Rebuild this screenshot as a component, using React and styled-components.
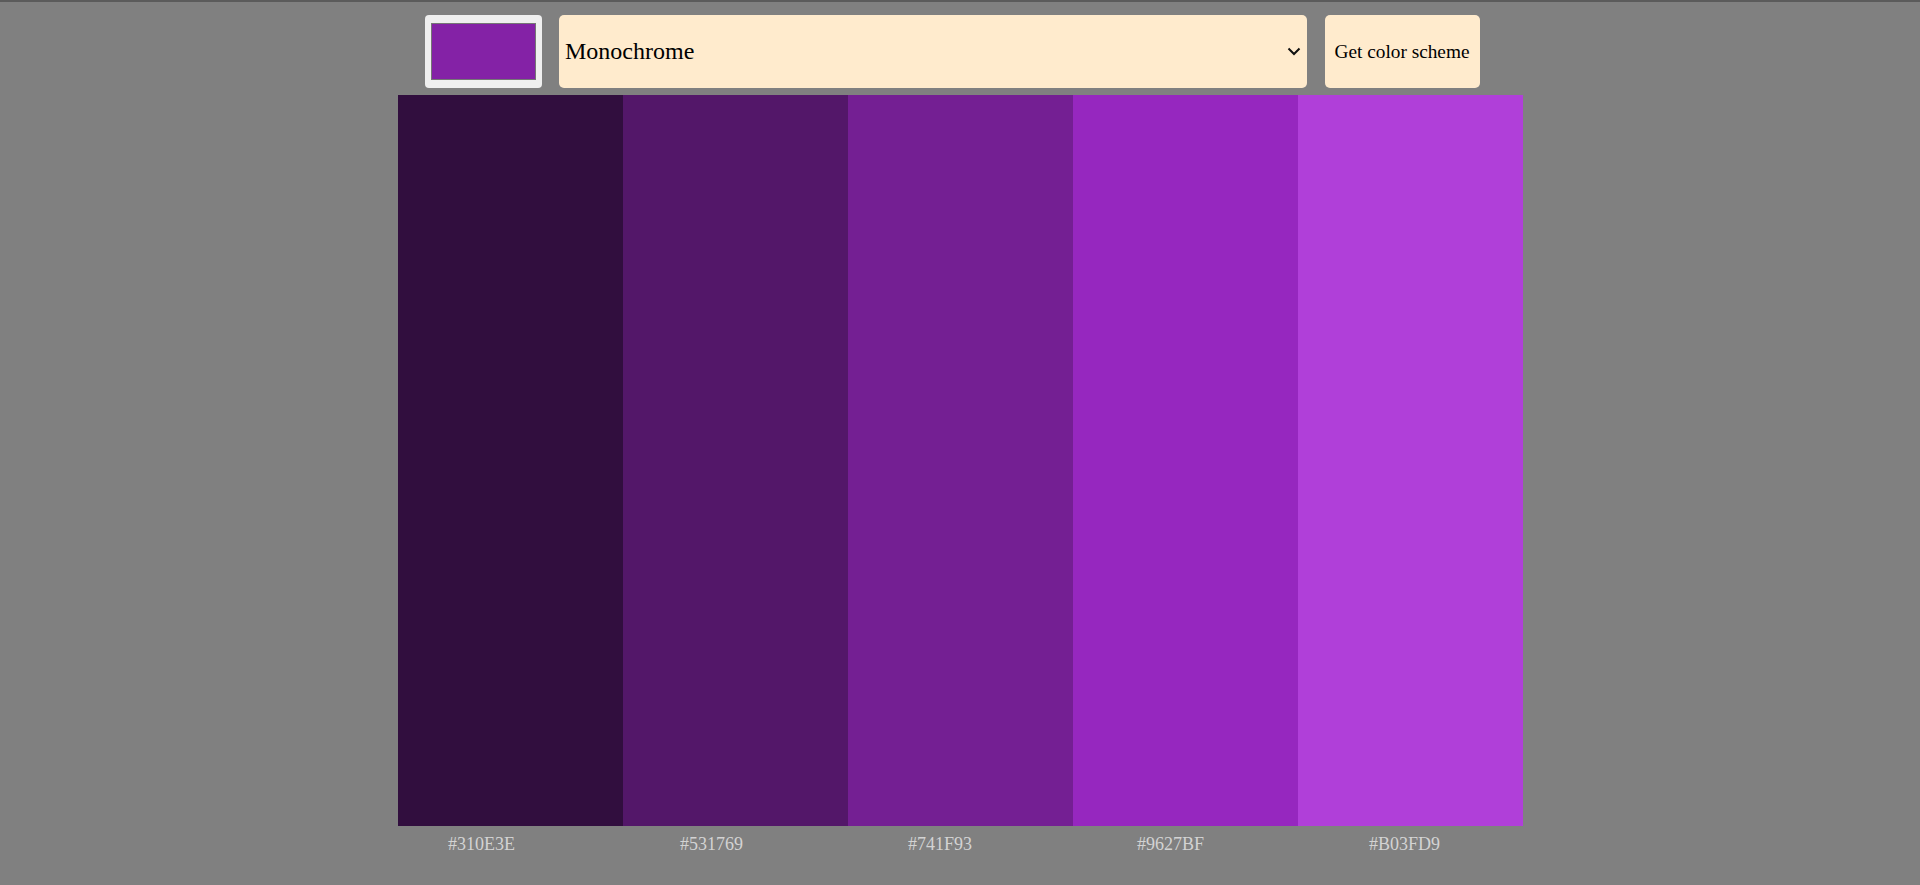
import React, { useState } from "react"
import styled, { createGlobalStyle } from "styled-components"

const GlobalStyle = createGlobalStyle`
  html, body {
    margin: 0;
    background-color: #808080;
    font-family: "Liberation Serif", "Times New Roman", serif;
  }
`

const Page = styled.div`
  border-top: 2px solid #5b5b5b;
  min-height: 883px;
  box-sizing: border-box;
`

const Main = styled.div`
  width: 1125px;
  margin: 0 auto;
  padding-top: 13px;
`

const Toolbar = styled.form`
  display: flex;
  gap: 17.5px;
  height: 73px;
  margin: 0 0 7px 27px;
`

const ColorPicker = styled.div`
  width: 117px;
  box-sizing: border-box;
  padding: 8px 6px;
  background-color: #efefef;
  border-radius: 4px;
  display: flex;
`

const Swatch = styled.div`
  flex: 1;
  background-color: ${ ({ color }) => color };
  border: 1px solid #767676;
`

const SelectBox = styled.div`
  position: relative;
  width: 748px;
  display: flex;
  align-items: center;
  box-sizing: border-box;
  padding: 0 6px;
  background-color: #ffebcd;
  border-radius: 5px;
  font-size: 24px;
  color: #000;

  svg {
    position: absolute;
    right: 6px;
    top: 32px;
  }
`

const Button = styled.button`
  width: 155px;
  padding: 0 9px;
  border: none;
  border-radius: 5px;
  background-color: #ffebcd;
  font-family: "Liberation Serif", "Times New Roman", serif;
  font-size: 19.3px;
  color: #000;
  white-space: nowrap;
`

const Palette = styled.div`
  display: grid;
  grid-template-columns: repeat(5, 1fr);
  height: 731px;
`

const Stripe = styled.div`
  background-color: ${ ({ color }) => color };
`

const Labels = styled.div`
  display: flex;
  justify-content: space-around;
  width: 1157px;
  margin: 8px 0 0 -32px;
`

const Label = styled.p`
  margin: 0;
  font-size: 18px;
  color: #d3d3d3;
`

const colors = ["#310E3E", "#531769", "#741F93", "#9627BF", "#B03FD9"]

const App = () => {
  const [seed] = useState("#8422a6")

  return (
    <Page>
      <GlobalStyle />
      <Main>
        <Toolbar onSubmit={ e => e.preventDefault() }>
          <ColorPicker>
            <Swatch color={ seed } />
          </ColorPicker>
          <SelectBox>
            Monochrome
            <svg width="14" height="9" viewBox="0 0 14 9">
              <path d="M1.5 1.5 L7 7 L12.5 1.5" fill="none" stroke="#111" strokeWidth="2" />
            </svg>
          </SelectBox>
          <Button type="submit">Get color scheme</Button>
        </Toolbar>
        <Palette>
          { colors.map(c => <Stripe color={ c } key={ c } />) }
        </Palette>
        <Labels>
          { colors.map(c => <Label key={ c }>{ c }</Label>) }
        </Labels>
      </Main>
    </Page>
  )
}

export default App
